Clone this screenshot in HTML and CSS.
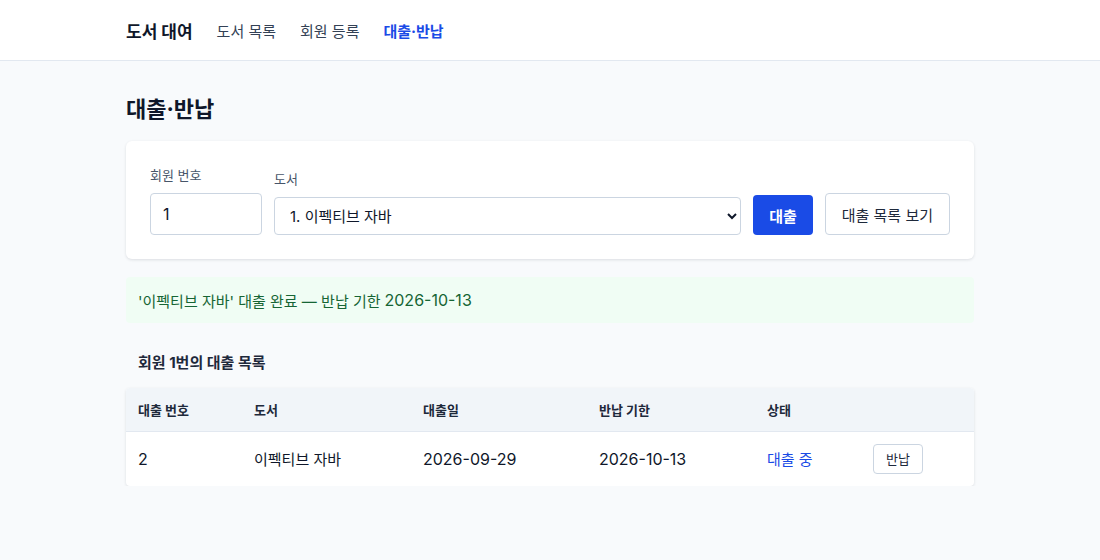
FILE: index.html
```html
<!DOCTYPE html>
<html lang="ko">
<head>
<meta charset="utf-8">
<title>도서 대여</title>
<link rel="stylesheet" href="styles.css">
</head>
<body>
<header class="topbar">
  <nav class="nav">
    <span class="brand">도서 대여</span>
    <a class="nav-link">도서 목록</a>
    <a class="nav-link">회원 등록</a>
    <a class="nav-link active">대출·반납</a>
  </nav>
</header>
<main class="page">
  <h1 class="title">대출·반납</h1>
  <section class="card form">
    <div class="field">
      <label class="label">회원 번호</label>
      <input class="input" type="text" value="1">
    </div>
    <div class="field grow">
      <label class="label">도서</label>
      <select class="select"><option>1. 이펙티브 자바</option></select>
    </div>
    <button class="btn primary">대출</button>
    <button class="btn outline">대출 목록 보기</button>
  </section>
  <div class="alert">'이펙티브 자바' 대출 완료 — 반납 기한 <span class="num">2026-10-13</span></div>
  <h2 class="subtitle">회원 1번의 대출 목록</h2>
  <div class="card table-card">
    <table class="table">
      <thead>
        <tr>
          <th class="c1">대출 번호</th>
          <th class="c2">도서</th>
          <th class="c3">대출일</th>
          <th class="c4">반납 기한</th>
          <th class="c5">상태</th>
          <th class="c6"></th>
        </tr>
      </thead>
      <tbody>
        <tr>
          <td class="num">2</td>
          <td>이펙티브 자바</td>
          <td class="num">2026-09-29</td>
          <td class="num">2026-10-13</td>
          <td class="status">대출 중</td>
          <td><button class="btn small">반납</button></td>
        </tr>
      </tbody>
    </table>
  </div>
</main>
</body>
</html>
```
FILE: styles.css
```css
* { box-sizing: border-box; }
body {
  margin: 0;
  background: #f8fafc;
  color: #0f172a;
  font-family: Inter, "Noto Sans CJK KR", "Noto Sans", sans-serif;
  font-size: 15px;
}
.topbar {
  height: 61px;
  background: #fff;
  border-bottom: 1px solid #e2e8f0;
}
.nav {
  width: 848px;
  margin: 0 auto;
  height: 60px;
  display: flex;
  align-items: center;
  gap: 24px;
}
.brand { font-size: 17px; font-weight: 700; color: #0f172a; }
.nav-link { font-size: 15px; color: #334155; }
.nav-link.active { color: #1a4be6; font-weight: 700; }
.page { width: 848px; margin: 0 auto; padding-top: 32px; }
.title { margin: 0 0 16px; font-size: 22px; font-weight: 700; line-height: 32px; color: #0f172a; }
.card {
  background: #fff;
  border-radius: 6px;
  box-shadow: 0 1px 3px rgba(15,23,42,0.12);
}
.form {
  padding: 24px;
  display: flex;
  align-items: flex-end;
  gap: 12px;
}
.field { display: flex; flex-direction: column; }
.field.grow { flex: 1; }
.label { font-size: 13px; color: #475569; line-height: 20px; margin-bottom: 8px; }
.input {
  width: 112px;
  height: 42px;
  padding: 0 12px;
  border: 1px solid #cbd5e1;
  border-radius: 4px;
  font: inherit;
  font-size: 16px;
  color: #0f172a;
}
.select {
  height: 38px;
  padding: 0 11px;
  border: 1px solid #cbd5e1;
  border-radius: 4px;
  font: inherit;
  font-size: 15px;
  color: #0f172a;
  background: #fff;
}
.btn {
  font: inherit;
  font-size: 15px;
  border-radius: 4px;
  cursor: pointer;
}
.btn.primary {
  height: 40px;
  padding: 0 16px;
  background: #1a4be6;
  color: #fff;
  border: none;
  font-weight: 700;
}
.btn.outline {
  height: 42px;
  padding: 0 16px;
  background: #fff;
  color: #1e293b;
  border: 1px solid #cbd5e1;
}
.alert {
  margin-top: 18px;
  padding: 0 12px;
  height: 46px;
  display: flex;
  align-items: center;
  gap: 4px;
  background: #f0fdf4;
  color: #166534;
  border-radius: 4px;
  font-size: 15px;
}
.num { font-size: 16px; }
.subtitle {
  margin: 28px 0 13px;
  padding-left: 12px;
  font-size: 15px;
  font-weight: 700;
  line-height: 24px;
  color: #1e293b;
}
.table-card { overflow: hidden; border-radius: 4px; }
.table { width: 100%; border-collapse: collapse; }
.table th {
  background: #f1f5f9;
  text-align: left;
  font-size: 13px;
  font-weight: 700;
  color: #1e293b;
  height: 43px;
  padding: 0 12px;
  border-bottom: 1px solid #e2e8f0;
}
.table td {
  height: 55px;
  padding: 0 12px;
  font-size: 15px;
  color: #0f172a;
}
.table td.num { font-size: 16px; }
.c1 { width: 116px; }
.c2 { width: 169px; }
.c3 { width: 176px; }
.c4 { width: 168px; }
.c5 { width: 106px; }
.table td.status { color: #1a4be6; }
.btn.small {
  height: 30px;
  padding: 0 12px;
  background: #fff;
  border: 1px solid #cbd5e1;
  font-size: 13px;
  color: #1e293b;
}
```
